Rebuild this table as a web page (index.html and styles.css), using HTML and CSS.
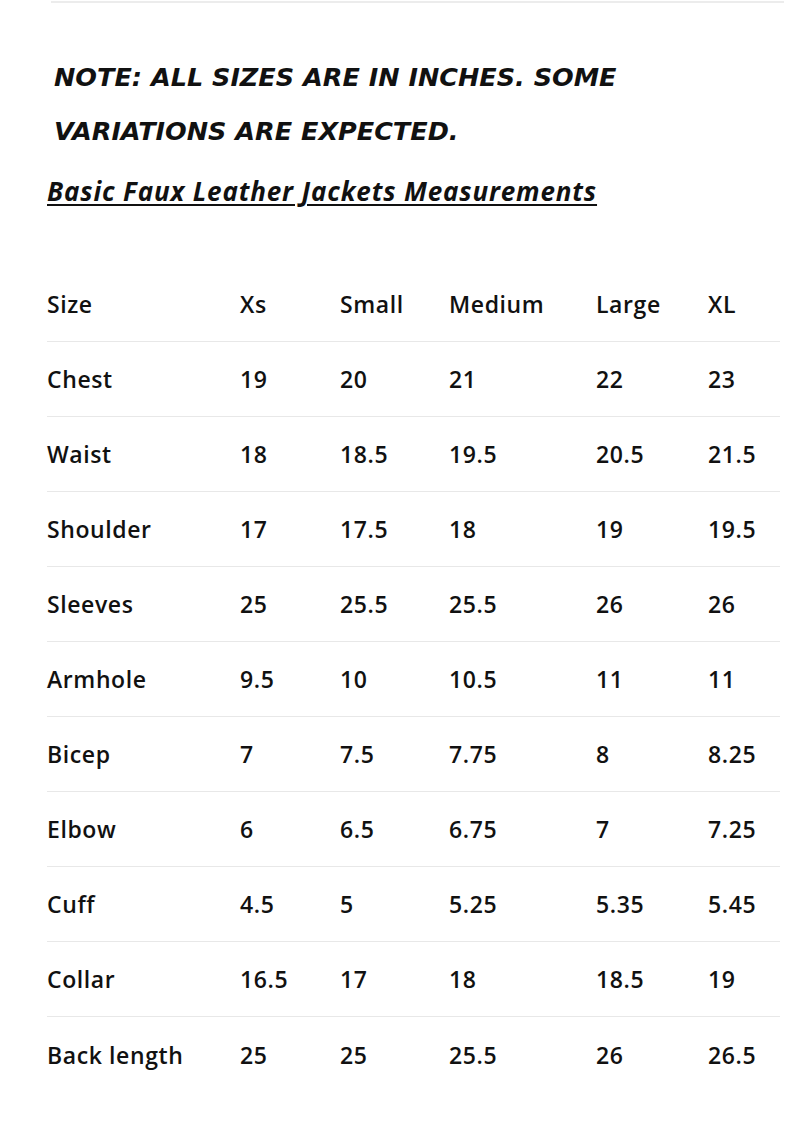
FILE: index.html
```html
<!DOCTYPE html>
<html lang="en">
<head>
<meta charset="utf-8">
<title>Basic Faux Leather Jackets Measurements</title>
<link rel="stylesheet" href="styles.css">
</head>
<body>
<div class="page">
  <div class="topline"></div>
  <p class="note">NOTE: ALL SIZES ARE IN INCHES. SOME<br>VARIATIONS ARE EXPECTED.</p>
  <h2 class="title">Basic Faux Leather Jackets Measurements</h2>
  <div class="table">
    <div class="row"><span>Size</span><span>Xs</span><span>Small</span><span>Medium</span><span>Large</span><span>XL</span></div>
    <div class="row"><span>Chest</span><span>19</span><span>20</span><span>21</span><span>22</span><span>23</span></div>
    <div class="row"><span>Waist</span><span>18</span><span>18.5</span><span>19.5</span><span>20.5</span><span>21.5</span></div>
    <div class="row"><span>Shoulder</span><span>17</span><span>17.5</span><span>18</span><span>19</span><span>19.5</span></div>
    <div class="row"><span>Sleeves</span><span>25</span><span>25.5</span><span>25.5</span><span>26</span><span>26</span></div>
    <div class="row"><span>Armhole</span><span>9.5</span><span>10</span><span>10.5</span><span>11</span><span>11</span></div>
    <div class="row"><span>Bicep</span><span>7</span><span>7.5</span><span>7.75</span><span>8</span><span>8.25</span></div>
    <div class="row"><span>Elbow</span><span>6</span><span>6.5</span><span>6.75</span><span>7</span><span>7.25</span></div>
    <div class="row"><span>Cuff</span><span>4.5</span><span>5</span><span>5.25</span><span>5.35</span><span>5.45</span></div>
    <div class="row"><span>Collar</span><span>16.5</span><span>17</span><span>18</span><span>18.5</span><span>19</span></div>
    <div class="row"><span>Back length</span><span>25</span><span>25</span><span>25.5</span><span>26</span><span>26.5</span></div>
  </div>
</div>
</body>
</html>
```

FILE: styles.css
```css
html, body {
  margin: 0;
  padding: 0;
  background: #fff;
}
body {
  font-family: "Open Sans", "Liberation Sans", sans-serif;
  color: #111;
}
.page {
  padding: 0 20px 0 47px;
}
.topline {
  margin: 1px 0 0 4px;
  height: 2px;
  background: #ececec;
  width: 733px;
}
.note {
  margin: 47px 0 0 0;
  padding-left: 7px;
  font-family: "DejaVu Sans", "Open Sans", sans-serif;
  font-size: 25.5px;
  line-height: 54px;
  font-weight: 700;
  font-style: italic;
  letter-spacing: 0;
  white-space: nowrap;
}
.title {
  margin: 16px 0 0 0;
  font-size: 26px;
  line-height: 34px;
  font-weight: 700;
  font-style: italic;
  text-decoration: underline;
  text-decoration-thickness: 2px;
  text-underline-offset: 3px;
  letter-spacing: 0.85px;
}
.table {
  margin-top: 59px;
  width: 733px;
}
.row {
  box-sizing: border-box;
  display: grid;
  grid-template-columns: 193px 100px 109px 147px 112px 1fr;
  align-items: center;
  height: 75px;
  border-bottom: 1.5px solid #e8e8e8;
  font-size: 23px;
  font-weight: 600;
  letter-spacing: 0.6px;
}
.row:last-child {
  border-bottom: none;
}
```
